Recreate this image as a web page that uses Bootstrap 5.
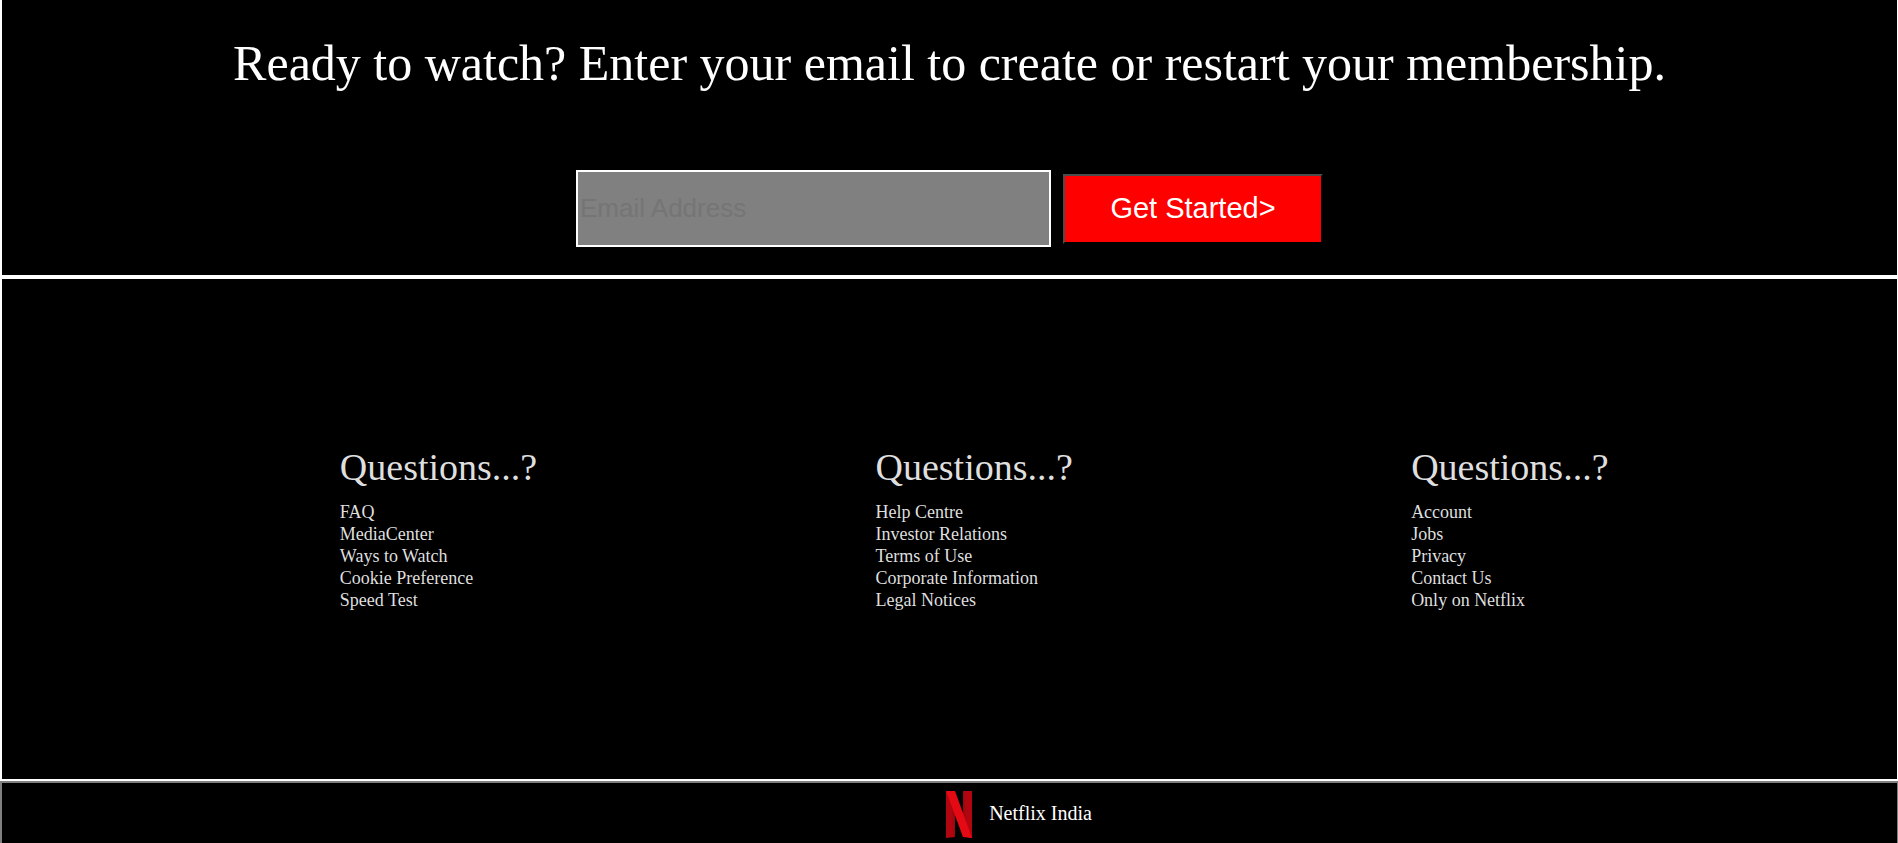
<!DOCTYPE html>
<html lang="en">
<head>
<meta charset="utf-8">
<meta name="viewport" content="width=device-width, initial-scale=1">
<title>Netflix India</title>
<link rel="stylesheet" href="https://cdn.jsdelivr.net/npm/bootstrap@5.3.0/dist/css/bootstrap.min.css">
<style>
  body { font-family: "Liberation Serif", serif; font-size: 18px; line-height: 22px; background: #000; color: #fff; }
  .panel { border: 2px solid #fff; border-right-width: 1px; }
  .signup { border-top: 0; padding: 33px 16px 28px; }
  .signup h1 { font-size: 50px; line-height: 60px; font-weight: 400; margin-bottom: 77px; }
  .signup form { gap: 12px; }
  .email-box, .start-btn { font-family: "Liberation Sans", sans-serif; border-radius: 0; }
  .email-box { width: 475px; max-width: 100%; height: 77px; padding: 1px 2px; font-size: 26px; border: 2px solid #fff; background: #808080; color: #000; }
  .email-box:focus { background: #808080; }
  .email-box::placeholder { color: #757575; }
  .start-btn { width: 260px; height: 70px; padding: 0 0 2px; font-size: 29px; line-height: 36px; color: #fff; background: red; border: 2px solid #000; border-top-color: #4c4c4c; border-left-color: #4c4c4c; }
  .start-btn:hover { color: #fff; background: #d00000; }
  .site-links { padding: 166px 15.2% 168px 17.8%; color: #dfdfdf; }
  .site-links h2 { font-size: 38px; line-height: 44px; font-weight: 400; margin-bottom: 12px; }
  .site-links a { color: inherit; }
  .brand-bar { border: 2px solid #808080; border-right-width: 1px; border-bottom: 0; padding: 8px 0 5px 139px; gap: 17px; font-size: 20px; }
</style>
<script src="https://cdn.jsdelivr.net/npm/bootstrap@5.3.0/dist/js/bootstrap.bundle.min.js"></script>
</head>
<body>
<main>
  <section class="panel signup text-center">
    <h1>Ready to watch? Enter your email to create or restart your membership.</h1>
    <form class="d-flex flex-wrap justify-content-center align-items-center">
      <input class="form-control email-box" type="email" id="email" aria-label="Email Address" placeholder="Email Address">
      <button class="btn start-btn" type="submit">Get Started&gt;</button>
    </form>
  </section>
  <nav class="panel site-links d-flex flex-wrap justify-content-between">
    <div>
      <h2>Questions...?</h2>
      <ul class="list-unstyled mb-0">
        <li><a class="text-decoration-none" href="#">FAQ</a></li>
        <li><a class="text-decoration-none" href="#">MediaCenter</a></li>
        <li><a class="text-decoration-none" href="#">Ways to Watch</a></li>
        <li><a class="text-decoration-none" href="#">Cookie Preference</a></li>
        <li><a class="text-decoration-none" href="#">Speed Test</a></li>
      </ul>
    </div>
    <div>
      <h2>Questions...?</h2>
      <ul class="list-unstyled mb-0">
        <li><a class="text-decoration-none" href="#">Help Centre</a></li>
        <li><a class="text-decoration-none" href="#">Investor Relations</a></li>
        <li><a class="text-decoration-none" href="#">Terms of Use</a></li>
        <li><a class="text-decoration-none" href="#">Corporate Information</a></li>
        <li><a class="text-decoration-none" href="#">Legal Notices</a></li>
      </ul>
    </div>
    <div>
      <h2>Questions...?</h2>
      <ul class="list-unstyled mb-0">
        <li><a class="text-decoration-none" href="#">Account</a></li>
        <li><a class="text-decoration-none" href="#">Jobs</a></li>
        <li><a class="text-decoration-none" href="#">Privacy</a></li>
        <li><a class="text-decoration-none" href="#">Contact Us</a></li>
        <li><a class="text-decoration-none" href="#">Only on Netflix</a></li>
      </ul>
    </div>
  </nav>
</main>
<footer class="brand-bar d-flex justify-content-center align-items-center">
  <svg width="26" height="47" viewBox="0 0 26 47" aria-hidden="true">
    <defs>
      <linearGradient id="foldL" x1="0" y1="0.6" x2="1" y2="0.4"><stop offset="0.6" stop-color="#b1060f"/><stop offset="1" stop-color="#930610"/></linearGradient>
      <linearGradient id="foldR" x1="0" y1="0.6" x2="1" y2="0.4"><stop offset="0" stop-color="#930610"/><stop offset="0.4" stop-color="#b1060f"/></linearGradient>
    </defs>
    <path fill="url(#foldL)" d="M0 0h9v46l-9 1z"/>
    <path fill="url(#foldR)" d="M17 0h9v47l-9-1z"/>
    <path fill="#e50914" d="M0 0h9l17 47q-5-1-9-1z"/>
  </svg>
  <span class="pb-1">Netflix India</span>
</footer>
</body>
</html>
